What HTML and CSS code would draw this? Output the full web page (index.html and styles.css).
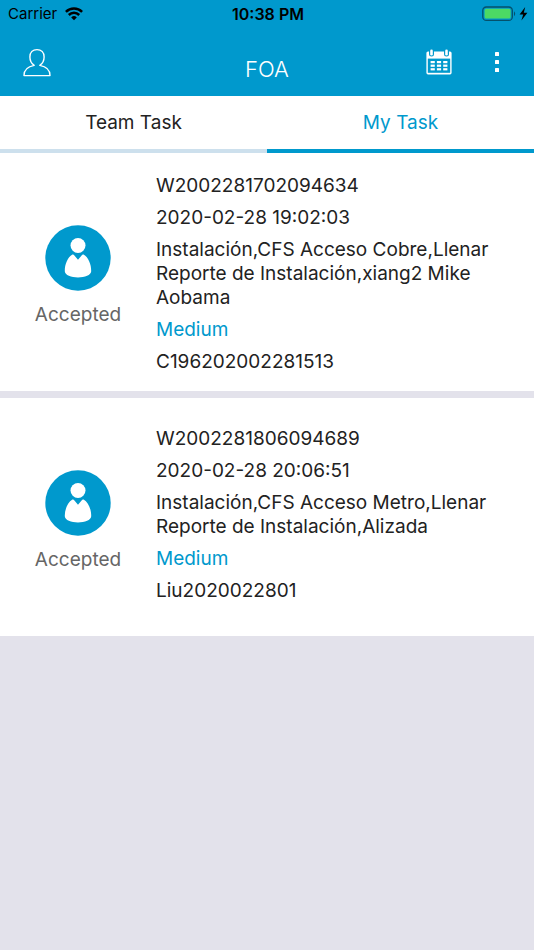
FILE: index.html
```html
<!DOCTYPE html>
<html lang="es">
<head>
    <meta charset="UTF-8">
    <meta name="viewport" content="width=device-width, initial-scale=1.0">
    <title>FOA</title>
    <link rel="stylesheet" href="styles.css">
</head>
<body>
    <header>
        <div class="status-bar">
            <div class="carrier">
                <span>Carrier</span>
                <svg width="18" height="14" viewBox="0 0 18 14" fill="none" stroke="#000" stroke-width="2.5">
                    <path d="M0.9 4.8 A11.6 11.6 0 0 1 17.1 4.8"/>
                    <path d="M3.8 8 A7.3 7.3 0 0 1 14.2 8"/>
                    <path d="M6.2 10.4 A4 4 0 0 1 11.8 10.4 L9 13.2 Z" fill="#000" stroke="none"/>
                </svg>
            </div>
            <span class="clock">10:38 PM</span>
            <div class="battery">
                <svg width="46" height="16" viewBox="0 0 46 16">
                    <rect x="0.8" y="1" width="29.5" height="13.4" rx="3.5" fill="none" stroke="#04506b" stroke-width="1.3"/>
                    <rect x="2.6" y="2.8" width="26" height="9.8" rx="1.6" fill="#4cd964"/>
                    <path d="M32 5.2 Q34.4 7.6 32 10.2 Z" fill="#04506b"/>
                    <path d="M43.2 1 L37.6 8.4 L41.2 8.4 L39.4 14.6 L45.4 6.8 L41.8 6.8 Z" fill="#000"/>
                </svg>
            </div>
        </div>
        <nav class="title-bar">
            <button type="button" class="icon-btn" aria-label="Profile">
                <svg width="28" height="30" viewBox="0 0 28 30" fill="none" stroke="#fff" stroke-width="1.4" stroke-linejoin="round">
                    <path d="M11.2 18.4 C8.2 16.4 6.9 13.2 6.9 10 C6.9 5.4 9.8 2.6 14 2.6 C18.2 2.6 21.1 5.4 21.1 10 C21.1 13.2 19.8 16.4 16.8 18.4 C22.4 19.4 27 22.6 27 28.6 L1 28.6 C1 22.6 5.6 19.4 11.2 18.4 Z"/>
                </svg>
            </button>
            <h1>FOA</h1>
            <div class="actions">
                <button type="button" class="icon-btn" aria-label="Calendar">
                    <svg width="26" height="26" viewBox="0 0 26 26">
                        <path d="M2 2.4 H24 Q25.6 2.4 25.6 4 V23.8 Q25.6 25.4 24 25.4 H2 Q0.4 25.4 0.4 23.8 V4 Q0.4 2.4 2 2.4 Z" fill="#fff"/>
                        <rect x="1.8" y="9.6" width="22.4" height="14.2" fill="#0099cd"/>
                        <g fill="#0099cd">
                            <rect x="3" y="0" width="5" height="7.6" rx="2.5"/>
                            <rect x="18" y="0" width="5" height="7.6" rx="2.5"/>
                        </g>
                        <g fill="#fff">
                            <rect x="4.2" y="0.6" width="2.6" height="6" rx="1.3"/>
                            <rect x="19.2" y="0.6" width="2.6" height="6" rx="1.3"/>
                        </g>
                        <g fill="#fff">
                            <rect x="4.6" y="12" width="4.2" height="2.2"/>
                            <rect x="10.9" y="12" width="4.2" height="2.2"/>
                            <rect x="17.2" y="12" width="4.2" height="2.2"/>
                            <rect x="4.6" y="15.6" width="4.2" height="2.2"/>
                            <rect x="10.9" y="15.6" width="4.2" height="2.2"/>
                            <rect x="17.2" y="15.6" width="4.2" height="2.2"/>
                            <rect x="4.6" y="19.2" width="4.2" height="2.2"/>
                            <rect x="10.9" y="19.2" width="4.2" height="2.2"/>
                            <rect x="17.2" y="19.2" width="4.2" height="2.2"/>
                        </g>
                    </svg>
                </button>
                <button type="button" class="icon-btn" aria-label="More">
                    <svg width="4" height="20" viewBox="0 0 4 20" fill="#fff">
                        <rect width="4" height="4" rx="0.6"/>
                        <rect y="8" width="4" height="4" rx="0.6"/>
                        <rect y="16" width="4" height="4" rx="0.6"/>
                    </svg>
                </button>
            </div>
        </nav>
    </header>

    <div class="tabs">
        <button type="button" class="tab">Team Task</button>
        <button type="button" class="tab active">My Task</button>
    </div>

    <main>
        <article class="task">
            <div class="task-status">
                <svg width="66" height="66" viewBox="0 0 66 66">
                    <circle cx="33" cy="33" r="32.7" fill="#0099cd"/>
                    <circle cx="33" cy="20.5" r="7.5" fill="#fff"/>
                    <path d="M27.4 29.6 Q28.6 29.2 29.4 30.4 L33 34.8 L36.6 30.4 Q37.4 29.2 38.6 29.6 C43.4 32.4 46.4 39.6 46.2 46.2 C46.2 50 39.6 52.4 33 52.4 C26.4 52.4 19.8 50 19.8 46.2 C19.6 39.6 22.6 32.4 27.4 29.6 Z" fill="#fff"/>
                </svg>
                <span>Accepted</span>
            </div>
            <div class="task-info">
                <p>W2002281702094634</p>
                <p>2020-02-28 19:02:03</p>
                <p>Instalación,CFS Acceso Cobre,Llenar Reporte de Instalación,xiang2 Mike Aobama</p>
                <p class="priority">Medium</p>
                <p>C196202002281513</p>
            </div>
        </article>

        <article class="task task-short">
            <div class="task-status">
                <svg width="66" height="66" viewBox="0 0 66 66">
                    <circle cx="33" cy="33" r="32.7" fill="#0099cd"/>
                    <circle cx="33" cy="20.5" r="7.5" fill="#fff"/>
                    <path d="M27.4 29.6 Q28.6 29.2 29.4 30.4 L33 34.8 L36.6 30.4 Q37.4 29.2 38.6 29.6 C43.4 32.4 46.4 39.6 46.2 46.2 C46.2 50 39.6 52.4 33 52.4 C26.4 52.4 19.8 50 19.8 46.2 C19.6 39.6 22.6 32.4 27.4 29.6 Z" fill="#fff"/>
                </svg>
                <span>Accepted</span>
            </div>
            <div class="task-info">
                <p>W2002281806094689</p>
                <p>2020-02-28 20:06:51</p>
                <p>Instalación,CFS Acceso Metro,Llenar Reporte de Instalación,Alizada</p>
                <p class="priority">Medium</p>
                <p>Liu2020022801</p>
            </div>
        </article>
    </main>
</body>
</html>
```
FILE: styles.css
```css
* {
    margin: 0;
    padding: 0;
    box-sizing: border-box;
}

body {
    font-family: Inter, "Liberation Sans", sans-serif;
    font-size: 19px;
    line-height: 24px;
    background-color: #e3e2eb;
    color: #222;
    min-height: 100vh;
}

svg {
    display: block;
}

button {
    font: inherit;
    border: none;
    background: none;
    cursor: pointer;
}

header {
    background-color: #0099cd;
}

.status-bar {
    display: grid;
    grid-template-columns: 1fr auto 1fr;
    align-items: center;
    height: 28px;
    padding: 0 6px 0 8px;
    color: #000;
    font-size: 15px;
}

.carrier {
    display: flex;
    align-items: center;
    gap: 8px;
}

.clock {
    font-size: 16px;
    font-weight: 600;
}

.battery {
    justify-self: end;
}

.title-bar {
    display: grid;
    grid-template-columns: 1fr auto 1fr;
    align-items: center;
    height: 68px;
    padding: 0 23px;
}

.icon-btn {
    justify-self: start;
}

.title-bar h1 {
    color: #fff;
    font-size: 22px;
    font-weight: 300;
    padding-top: 14px;
}

.actions {
    display: flex;
    align-items: center;
    justify-content: flex-end;
    gap: 43px;
    padding-right: 12px;
}

.tabs {
    display: flex;
    background-color: #fff;
}

.tab {
    flex: 1;
    height: 57px;
    color: #222;
    border-bottom: 4px solid #cde0ed;
}

.tab.active {
    color: #0099cd;
    border-bottom-color: #0099cd;
}

.task {
    display: flex;
    min-height: 238px;
    padding: 21px 32px 17px 0;
    margin-bottom: 7px;
    background-color: #fff;
}

.task-short {
    padding-top: 29px;
    padding-bottom: 25px;
}

.task-status {
    display: flex;
    flex-direction: column;
    align-items: center;
    align-self: center;
    gap: 12px;
    width: 156px;
    flex-shrink: 0;
    padding-top: 4px;
    color: #666;
}

.task-info {
    display: flex;
    flex-direction: column;
    gap: 8px;
}

.priority {
    color: #0099cd;
}
```
